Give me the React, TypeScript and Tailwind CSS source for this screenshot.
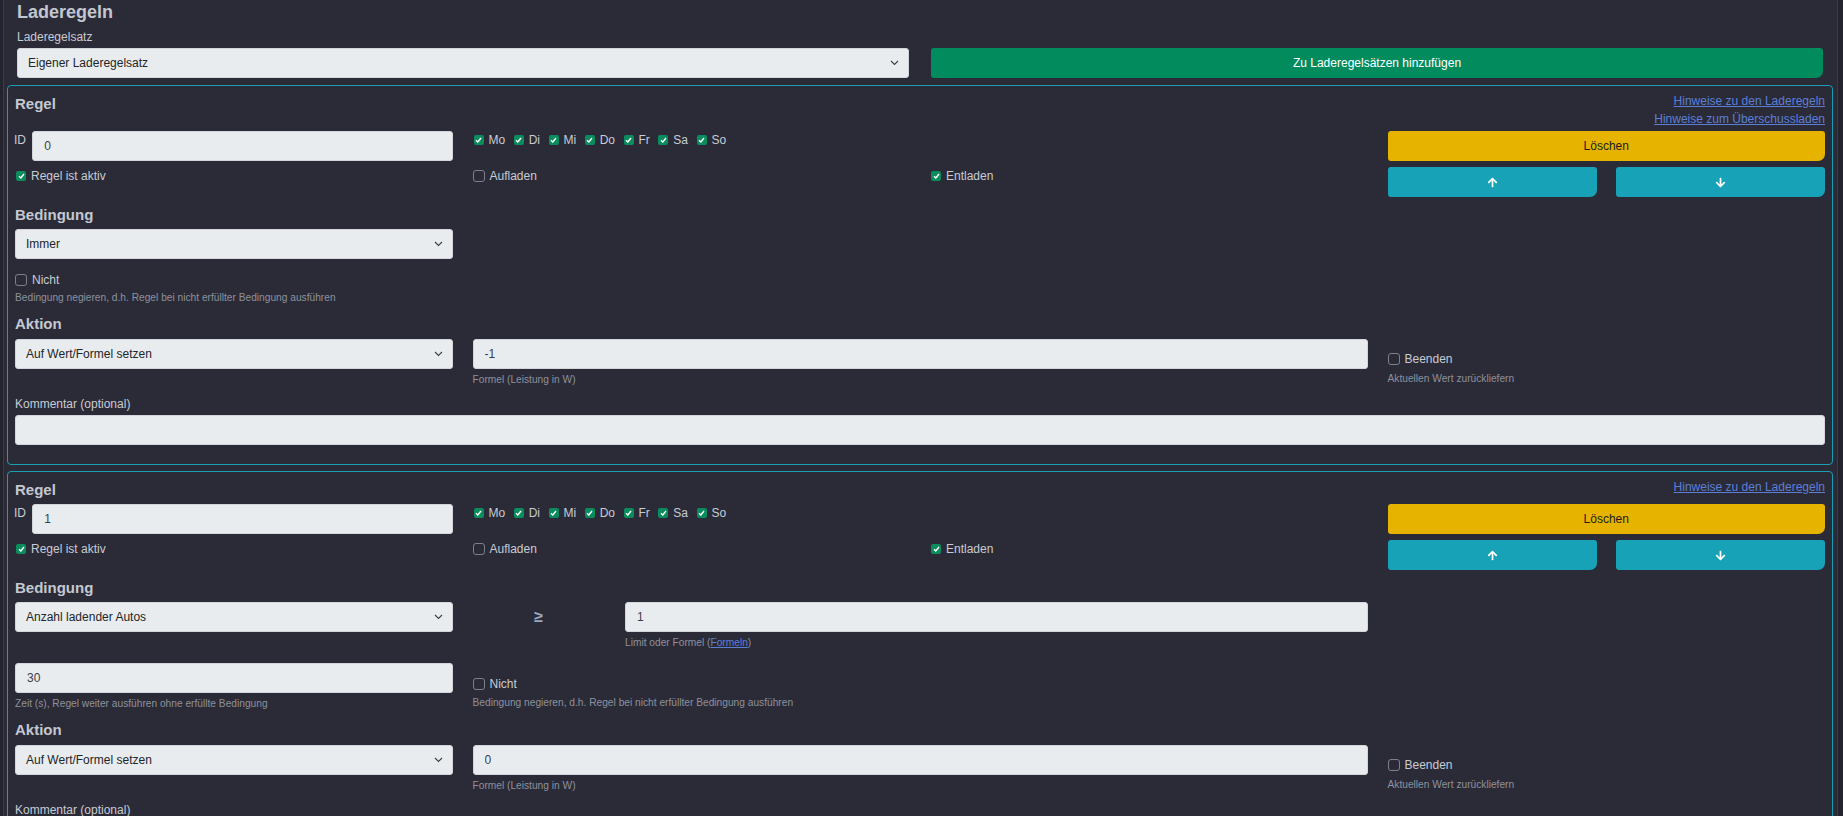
import { FaArrowUp, FaArrowDown } from "react-icons/fa";

const WEEKDAYS = ["Mo", "Di", "Mi", "Do", "Fr", "Sa", "So"];

function Box({ checked, label }: { checked: boolean; label: string }) {
  return (
    <label className="flex items-center h-[18px] leading-[18px] text-[12px] text-[#c8cbd3] whitespace-nowrap">
      {checked ? (
        <span className="ml-[1px] mr-[5px] w-[10px] h-[10px] rounded-[2px] bg-[#0a8c5d] flex items-center justify-center">
          <svg width="7" height="6" viewBox="0 0 7 6">
            <path d="M1 3.2 2.8 5 6 1" fill="none" stroke="#fff" strokeWidth="1.4" />
          </svg>
        </span>
      ) : (
        <span className="mr-[5px] w-[12px] h-[12px] rounded-[3px] border border-[#7d808b]" />
      )}
      {label}
    </label>
  );
}

function Select({ value }: { value: string }) {
  return (
    <div className="h-[30px] rounded-[3px] bg-[#e9ecef] border border-[#d3d7dc] flex items-center justify-between pl-[10px] pr-[9px] text-[12px] text-[#212529]">
      <span>{value}</span>
      <svg width="9" height="6" viewBox="0 0 9 6">
        <path d="M1 1l3.5 3.5L8 1" fill="none" stroke="#3a3f45" strokeWidth="1.1" />
      </svg>
    </div>
  );
}

function Input({ value }: { value: string }) {
  return (
    <input
      readOnly
      value={value}
      className="w-full h-[30px] rounded-[3px] bg-[#e9ecef] border border-[#d3d7dc] px-[11px] text-[12px] text-[#3b4047] outline-none"
    />
  );
}

function Help({ children }: { children: React.ReactNode }) {
  return <div className="mt-[3px] text-[10.2px] leading-[15px] text-[#8d919b] whitespace-nowrap">{children}</div>;
}

function Heading({ children, className = "" }: { children: React.ReactNode; className?: string }) {
  return <h3 className={`text-[15px] font-bold leading-[23px] text-[#c4c8d0] ${className}`}>{children}</h3>;
}

function NotBlock() {
  return (
    <div className="pt-[12px]">
      <Box checked={false} label="Nicht" />
      <div className="mt-[1.5px] text-[10.2px] leading-[15px] text-[#8d919b] whitespace-nowrap">
        Bedingung negieren, d.h. Regel bei nicht erfüllter Bedingung ausführen
      </div>
    </div>
  );
}

const btn = "h-[30px] rounded-[3px] rounded-br-[7px] flex items-center justify-center text-[12px]";

function Rule({ id, surplusLink, condition, formula }: { id: string; surplusLink: boolean; condition: "always" | "cars"; formula: string }) {
  return (
    <div className="border border-[#1b9db3] rounded-[4px] px-[7px] pb-[19px]">
      {/* Kopfzeile */}
      <div className="flex justify-between items-start pt-[6px]">
        <Heading>Regel</Heading>
        <div className="flex flex-col items-end text-[12px] leading-[18px]">
          <a className="text-[#5b7fd6] underline">Hinweise zu den Laderegeln</a>
          {surplusLink && <a className="text-[#5b7fd6] underline">Hinweise zum Überschussladen</a>}
        </div>
      </div>

      <div className="grid grid-cols-4 gap-x-5 gap-y-[6px] mt-[3px] items-start">
        <div className="flex items-start">
          <span className="text-[12px] leading-[18px] text-[#c8cbd3] w-[19px] -ml-[1px]">ID</span>
          <Input value={id} />
        </div>
        <div className="flex gap-[7.5px]">
          {WEEKDAYS.map((d) => (
            <Box key={d} checked label={d} />
          ))}
        </div>
        <div />
        <button className={`${btn} bg-[#e6b400] text-[#1d1d1d]`}>Löschen</button>

        <Box checked label="Regel ist aktiv" />
        <Box checked={false} label="Aufladen" />
        <Box checked label="Entladen" />
        <div className="grid grid-cols-2 gap-x-[19px]">
          <button className={`${btn} bg-[#18a2b8] text-white`}>
            <FaArrowUp size={11} />
          </button>
          <button className={`${btn} bg-[#18a2b8] text-white`}>
            <FaArrowDown size={11} />
          </button>
        </div>
      </div>

      <Heading className="mt-[5.5px]">Bedingung</Heading>
      {condition === "always" ? (
        <div className="grid grid-cols-4 gap-x-5 mt-[3px]">
          <div>
            <Select value="Immer" />
            <NotBlock />
          </div>
        </div>
      ) : (
        <>
          <div className="grid grid-cols-12 gap-x-5 mt-[3px] items-start">
            <div className="col-span-3">
              <Select value="Anzahl ladender Autos" />
            </div>
            <div className="col-span-1 h-[30px] flex items-center justify-center text-[16px] font-bold text-[#9aa9bd]">≥</div>
            <div className="col-span-5">
              <Input value="1" />
              <Help>
                Limit oder Formel (<a className="text-[#5b7fd6] underline">Formeln</a>)
              </Help>
            </div>
          </div>
          <div className="grid grid-cols-4 gap-x-5 mt-[13.5px] items-start">
            <div>
              <Input value="30" />
              <Help>Zeit (s), Regel weiter ausführen ohne erfüllte Bedingung</Help>
            </div>
            <NotBlock />
          </div>
        </>
      )}

      <Heading className="mt-[7px]">Aktion</Heading>
      <div className="grid grid-cols-4 gap-x-5 mt-[4px] items-start">
        <Select value="Auf Wert/Formel setzen" />
        <div className="col-span-2">
          <Input value={formula} />
          <Help>Formel (Leistung in W)</Help>
        </div>
        <div className="pt-[11px]">
          <Box checked={false} label="Beenden" />
          <Help>Aktuellen Wert zurückliefern</Help>
        </div>
      </div>

      <div className="mt-[8px] text-[12px] leading-[18px] text-[#c8cbd3]">Kommentar (optional)</div>
      <div className="mt-[2px]">
        <Input value="" />
      </div>
    </div>
  );
}

export default function App() {
  return (
    <div className="h-[816px] overflow-hidden bg-[#23242d]" style={{ fontFamily: '"Liberation Sans", Arial, sans-serif' }}>
      <div className="ml-[3px] mr-[5px] min-h-full border-x border-[#3b3c48] bg-[#2b2b38]">
        <div className="pl-[13px] pr-[14px] pt-[1px]">
          <h2 className="text-[18px] font-bold leading-[22px] text-[#c2c7cf]">Laderegeln</h2>
          <div className="mt-[6px] text-[12px] leading-[16px] text-[#c8cbd3]">Laderegelsatz</div>
          <div className="grid grid-cols-2 gap-x-[22px] mt-[3px]">
            <Select value="Eigener Laderegelsatz" />
            <button className={`${btn} bg-[#028c5e] text-white`}>Zu Laderegelsätzen hinzufügen</button>
          </div>
        </div>
        <div className="pl-[3px] pr-[4px] pt-[7px] flex flex-col gap-[6px]">
          <Rule id="0" surplusLink condition="always" formula="-1" />
          <Rule id="1" surplusLink={false} condition="cars" formula="0" />
        </div>
      </div>
    </div>
  );
}
